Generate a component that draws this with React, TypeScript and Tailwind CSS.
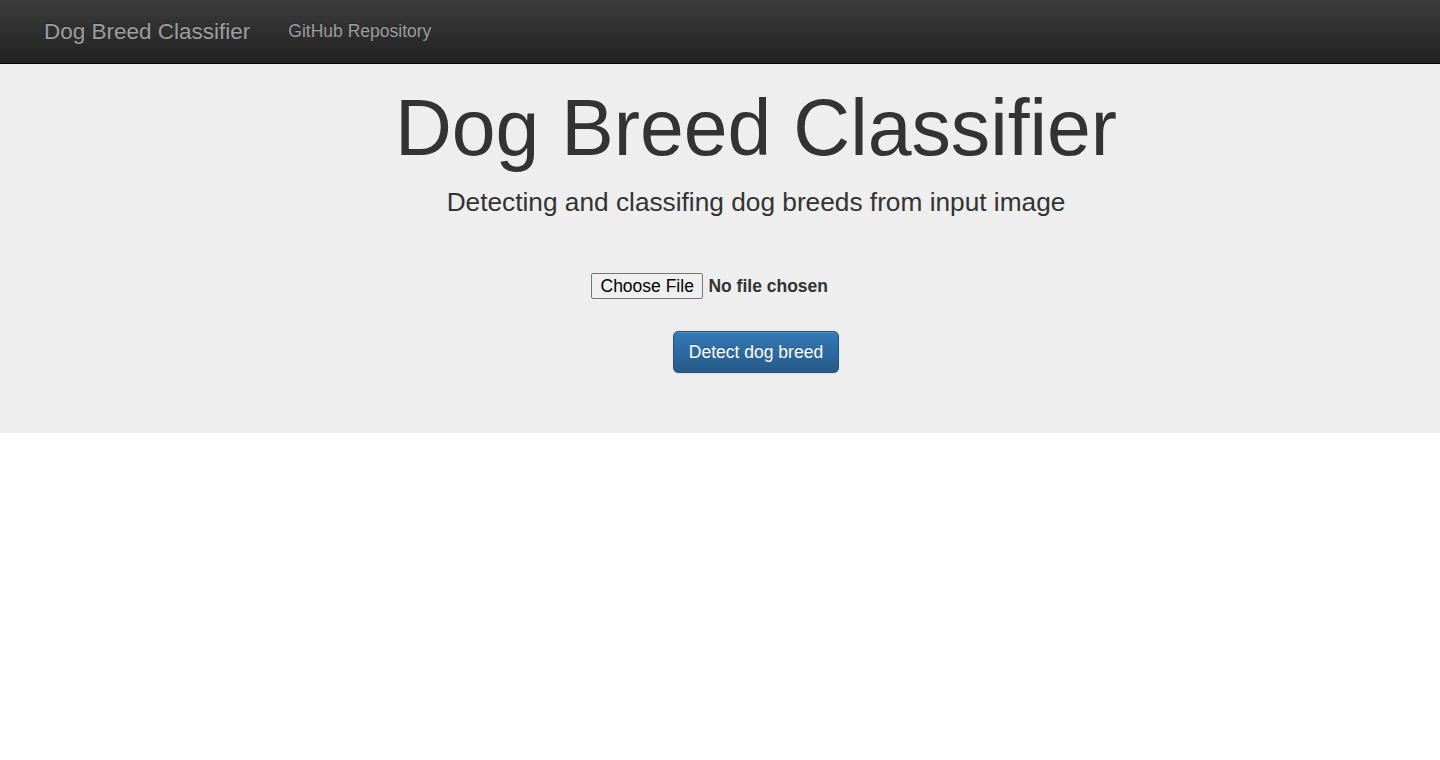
import React from 'react';

const App = () => {
  return (
    <div className="min-h-[760px] bg-white font-['Liberation_Sans',Arial,sans-serif] text-[#333]">
      {/* navbar */}
      <nav className="h-[64px] border-b border-[#080808] bg-gradient-to-b from-[#3c3c3c] to-[#222]">
        <div className="flex h-[63px] items-center pl-[44px]">
          <a href="#" className="text-[22.5px] text-[#9d9d9d] [text-shadow:0_-1px_0_rgba(0,0,0,0.25)]">
            Dog Breed Classifier
          </a>
          <a href="#" className="ml-[38px] text-[17.5px] text-[#9d9d9d] [text-shadow:0_-1px_0_rgba(0,0,0,0.25)]">
            GitHub Repository
          </a>
        </div>
      </nav>

      {/* jumbotron */}
      <div className="bg-[#eee] pl-[72px] pt-[21px] pb-[60px]">
        <div className="text-center">
          <h1 className="text-[78.75px] leading-[86.6px] text-[#333]">Dog Breed Classifier</h1>
          <p className="mt-[12.5px] text-[26.25px] leading-[37.5px]">Detecting and classifing dog breeds from input image</p>
        </div>

        <form className="mt-[51.5px] flex flex-col items-center" onSubmit={(e) => e.preventDefault()}>
          <div className="flex w-[330px] items-center">
            <label className="flex h-[26px] cursor-pointer items-center rounded-[2px] border border-[#767676] bg-[#efefef] px-[8.5px] text-[17.5px] text-black">
              Choose File
              <input type="file" className="hidden" />
            </label>
            <span className="ml-[5px] text-[17.5px] font-bold text-[#333]">No file chosen</span>
          </div>
          <button
            type="submit"
            className="mt-[32px] h-[42px] rounded-[5px] border border-[#245580] bg-gradient-to-b from-[#337ab7] to-[#265a88] px-[15px] text-[17.5px] text-white shadow-[inset_0_1px_0_rgba(255,255,255,0.15),0_1px_1px_rgba(0,0,0,0.075)] [text-shadow:0_-1px_0_rgba(0,0,0,0.2)]"
          >
            Detect dog breed
          </button>
        </form>
      </div>
    </div>
  );
};

export default App;
